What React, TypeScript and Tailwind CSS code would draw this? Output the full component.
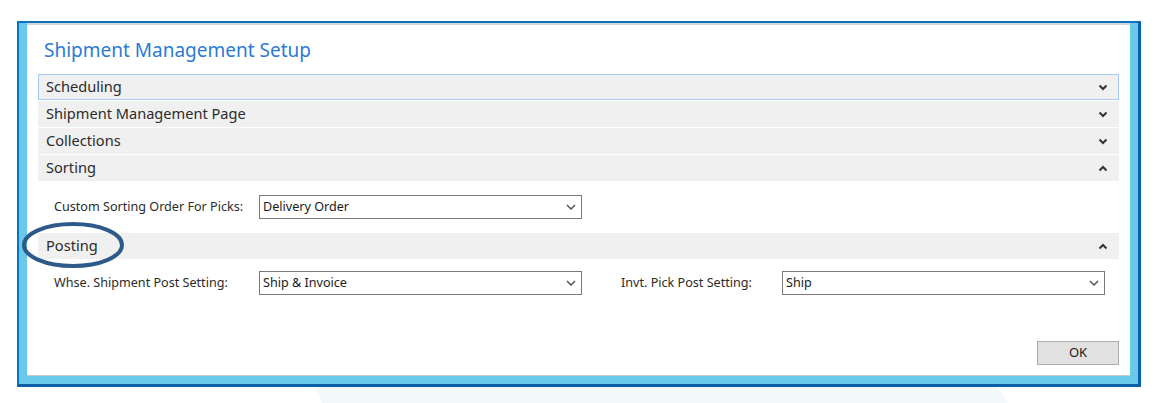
const sections = [
  { title: 'Scheduling', open: false, focused: true },
  { title: 'Shipment Management Page', open: false },
  { title: 'Collections', open: false },
  { title: 'Sorting', open: true },
];

function Chevron({ up = false }: { up?: boolean }) {
  return (
    <svg width="10" height="7" viewBox="0 0 10 7" className="shrink-0">
      <polyline
        points={up ? '1.5,5.5 5,2 8.5,5.5' : '1.5,1.5 5,5 8.5,1.5'}
        fill="none"
        stroke="#333"
        strokeWidth="2"
      />
    </svg>
  );
}

function SectionHeader({ title, open, focused }: { title: string; open: boolean; focused?: boolean }) {
  return (
    <div
      className={`flex h-[26px] items-center justify-between bg-[#f0f0f0] text-[14.6px] text-[#2b2b2b] ${
        focused ? 'border border-[#a6c8f5] pl-[7px] pr-[10px]' : 'pl-[8px] pr-[11px]'
      }`}
    >
      <span>{title}</span>
      <Chevron up={open} />
    </div>
  );
}

function Dropdown({ value }: { value: string }) {
  return (
    <div className="flex h-[24px] w-[323px] items-center justify-between border border-[#7a7a7a] bg-white pl-[3px] pr-[5px] text-[12.6px] text-[#1a1a1a]">
      <span>{value}</span>
      <svg width="10" height="6" viewBox="0 0 10 6">
        <polyline points="1,1 5,5 9,1" fill="none" stroke="#555" strokeWidth="1.5" />
      </svg>
    </div>
  );
}

export default function App() {
  return (
    <div
      className="relative h-[403px] w-[1162px] overflow-hidden bg-white pl-[17px] pt-[21px]"
      style={{ fontFamily: '"Segoe UI", "Noto Sans", "Open Sans", sans-serif' }}
    >
      <svg className="absolute left-0 top-0" width="1162" height="403">
        <polygon points="315,386 997,386 1008,403 322,403" fill="#f3f8fb" />
      </svg>

      <div className="relative w-[1124px] border-b-[3px] border-l-2 border-r-[3px] border-t-2 border-b-[#0b5fa6] border-l-[#0a70c0] border-r-[#0b5fa6] border-t-[#0a70c0] bg-[#68c9ea] px-[8px] pb-[8px]">
        <div className="flex h-[353px] flex-col border-b border-t-2 border-b-[#c8c8c8] border-t-[#d6d6d6] bg-white px-[11px]">
          <div className="pl-[6px] pt-[10px] text-[19px] leading-[30px] text-[#2a7bd4]">
            Shipment Management Setup
          </div>

          <div className="mt-[9px] flex flex-col gap-[1px]">
            {sections.map((s) => (
              <SectionHeader key={s.title} title={s.title} open={s.open} focused={s.focused} />
            ))}
          </div>

          <div className="flex h-[52px] items-center pl-[16px] text-[12.6px] text-[#2b2b2b]">
            <span className="w-[205px]">Custom Sorting Order For Picks:</span>
            <Dropdown value="Delivery Order" />
          </div>

          <div className="relative">
            <SectionHeader title="Posting" open />
            <svg className="absolute left-[-17px] top-[-11px]" width="108" height="50">
              <ellipse cx="52" cy="23" rx="49" ry="21" fill="none" stroke="#2e5a8a" strokeWidth="4" />
            </svg>
          </div>

          <div className="flex h-[48px] items-center pl-[16px] text-[12.6px] text-[#2b2b2b]">
            <span className="w-[205px]">Whse. Shipment Post Setting:</span>
            <Dropdown value="Ship & Invoice" />
            <span className="ml-[39px] w-[161px]">Invt. Pick Post Setting:</span>
            <Dropdown value="Ship" />
          </div>

          <div className="mt-auto flex justify-end pb-[10px]">
            <button
              type="button"
              className="h-[24px] w-[82px] border border-[#adadad] bg-[#e1e1e1] text-[13px] text-[#1a1a1a]"
            >
              OK
            </button>
          </div>
        </div>
      </div>
    </div>
  );
}
